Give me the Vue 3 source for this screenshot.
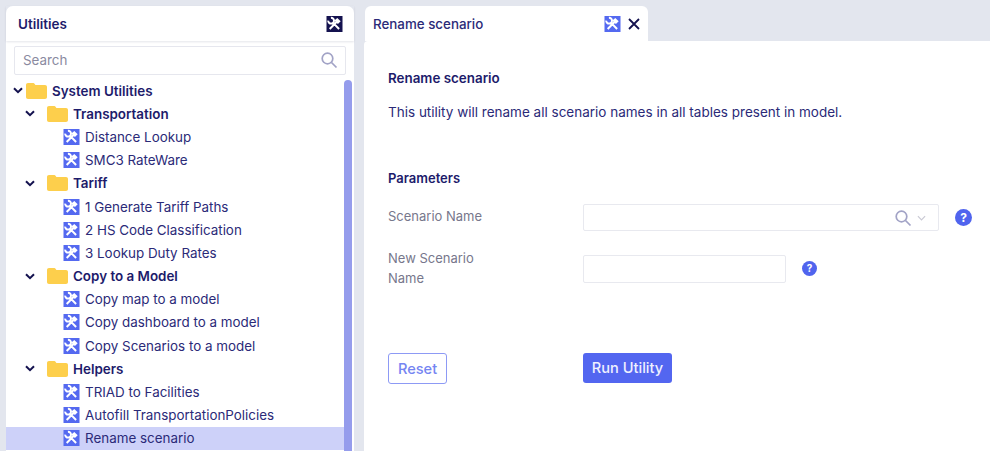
<script setup>
const tree = [
  { label: 'System Utilities', type: 'root' },
  { label: 'Transportation', type: 'folder' },
  { label: 'Distance Lookup', type: 'item' },
  { label: 'SMC3 RateWare', type: 'item' },
  { label: 'Tariff', type: 'folder' },
  { label: '1 Generate Tariff Paths', type: 'item' },
  { label: '2 HS Code Classification', type: 'item' },
  { label: '3 Lookup Duty Rates', type: 'item' },
  { label: 'Copy to a Model', type: 'folder' },
  { label: 'Copy map to a model', type: 'item' },
  { label: 'Copy dashboard to a model', type: 'item' },
  { label: 'Copy Scenarios to a model', type: 'item' },
  { label: 'Helpers', type: 'folder' },
  { label: 'TRIAD to Facilities', type: 'item' },
  { label: 'Autofill TransportationPolicies', type: 'item' },
  { label: 'Rename scenario', type: 'item', selected: true }
];
// wrench and handles as strokes, hammer head as a filled block
const toolLines = 'M4.400 1.800A2.900 2.900 0 1 1 1.700 4.600M6.400 6.600 12.600 13M10.500 5.500 3.200 13';
const toolHead = 'M14.200 5.300 10.800 1.900 7.800 4.400 11.400 8z';
</script>

<template>
  <div class="page">
    <aside class="side">
      <header class="side-head">
        <span class="side-title">Utilities</span>
        <svg class="tool dark" viewBox="0 0 16 16"><rect width="16" height="16" /><path class="lines" :d="toolLines" /><path class="head" :d="toolHead" /></svg>
      </header>
      <div class="search-wrap">
        <div class="search">
          <span>Search</span>
          <svg class="mag" viewBox="0 0 18 18"><circle cx="7.500" cy="7.500" r="5.300" /><path d="M11.500 11.500 16.500 16.500" /></svg>
        </div>
      </div>
      <div class="tree">
        <div class="thumb"></div>
        <div
          v-for="row in tree"
          :key="row.label"
          class="row"
          :class="[row.type, { selected: row.selected }]"
        >
          <template v-if="row.type === 'item'">
            <svg class="tool" viewBox="0 0 16 16"><rect width="16" height="16" /><path class="lines" :d="toolLines" /><path class="head" :d="toolHead" /></svg>
            <span>{{ row.label }}</span>
          </template>
          <template v-else>
            <svg class="chev" viewBox="0 0 10 7"><path d="M1 1.200 5 5.200 9 1.200" /></svg>
            <svg class="fold" viewBox="0 0 21 16"><path d="M0 2C0 .8.8 0 2 0h5c.8 0 1.200.3 1.700 1l.7 1H19c1.200 0 2 .8 2 2v10c0 1.200-.8 2-2 2H2c-1.200 0-2-.8-2-2z" /></svg>
            <span>{{ row.label }}</span>
          </template>
        </div>
      </div>
    </aside>

    <main class="main">
      <div class="tabs">
        <div class="tab">
          <span class="tab-title">Rename scenario</span>
          <svg class="tool" viewBox="0 0 16 16"><rect width="16" height="16" /><path class="lines" :d="toolLines" /><path class="head" :d="toolHead" /></svg>
          <svg class="close" viewBox="0 0 12 12"><path d="M1 1 11 11M11 1 1 11" /></svg>
        </div>
      </div>
      <section class="content">
        <h2 class="title">Rename scenario</h2>
        <p class="desc">This utility will rename all scenario names in all tables present in model.</p>
        <h3 class="params">Parameters</h3>
        <div class="field first">
          <label>Scenario Name</label>
          <div class="input wide">
            <svg class="mag" viewBox="0 0 18 18"><circle cx="7.500" cy="7.500" r="5.300" /><path d="M11.500 11.500 16.500 16.500" /></svg>
            <svg class="drop" viewBox="0 0 10 6"><path d="M1 1 5 5 9 1" /></svg>
          </div>
          <span class="help big">?</span>
        </div>
        <div class="field second">
          <label>New Scenario<br />Name</label>
          <div class="input narrow"></div>
          <span class="help small">?</span>
        </div>
        <div class="actions">
          <button class="btn-reset">Reset</button>
          <button class="btn-run">Run Utility</button>
        </div>
      </section>
    </main>
  </div>
</template>

<style>
html, body {
  margin: 0;
  background: #e3e6ee;
}
</style>

<style scoped>
.page {
  display: flex;
  height: 451px;
  width: 990px;
  overflow: hidden;
  box-sizing: border-box;
  padding: 6px 0 0 6px;
  background: #e3e6ee;
  font-family: Inter, "Liberation Sans", sans-serif;
  color: #1d1b6b;
}

.side {
  width: 348px;
  display: flex;
  flex-direction: column;
  background: #fff;
  border-radius: 7px 7px 0 0;
  flex: none;
}

.side-head {
  height: 35px;
  flex: none;
  display: flex;
  align-items: center;
  justify-content: space-between;
  padding: 0 11px 0 12px;
  box-shadow: 0 1px 2px rgba(40, 50, 90, 0.12);
  font-size: 13.5px;
  font-weight: 600;
}

.search-wrap {
  padding: 5px 8px 4px;
}

.search {
  height: 29px;
  box-sizing: border-box;
  border: 1px solid #e6e7ee;
  border-radius: 2px;
  display: flex;
  align-items: center;
  justify-content: space-between;
  padding: 0 7px 1px 8px;
  font-size: 13.4px;
  color: #8a8aa0;
}

.mag {
  width: 18px;
  height: 18px;
  fill: none;
  stroke: #a2a3c6;
  stroke-width: 1.7;
}

.tree {
  position: relative;
  flex: 1;
  min-height: 0;
}

.thumb {
  position: absolute;
  right: 2px;
  top: 1px;
  bottom: 0;
  width: 8px;
  border-radius: 4px 4px 0 0;
  background: #959cec;
}

.row {
  height: 23.2px;
  display: flex;
  align-items: center;
  font-size: 13.4px;
  color: #2b2a78;
  white-space: nowrap;
}

.row.root,
.row.folder {
  font-weight: 600;
  color: #1d1b6b;
}

.row.root {
  padding-left: 7px;
}

.row.folder {
  padding-left: 19px;
}

.row.item {
  padding-left: 57px;
}

.row.selected {
  background: #cdd1f9;
  margin-right: 10px;
}

.chev {
  width: 10px;
  height: 7px;
  fill: none;
  stroke: #14124f;
  stroke-width: 2;
  flex: none;
}

.fold {
  width: 21px;
  height: 16px;
  fill: #fdcf4c;
  flex: none;
}

.row.root .fold {
  margin: 0 5px 0 3px;
}

.row.folder .fold {
  margin: 0 5px 0 12px;
}

.tool {
  width: 17px;
  height: 16px;
  flex: none;
}

.tool rect {
  fill: #5469f0;
}

.tool .lines {
  fill: none;
  stroke: #fff;
  stroke-width: 2;
}

.tool .head {
  fill: #fff;
}

.tool.dark rect {
  fill: #14124f;
}

.row .tool {
  margin-right: 5px;
}

.main {
  flex: 1;
  min-width: 0;
  display: flex;
  flex-direction: column;
  padding-left: 10px;
}

.tabs {
  height: 35px;
  flex: none;
  padding-left: 1px;
}

.tab {
  width: 283px;
  height: 35px;
  background: #fff;
  border-radius: 6px 6px 0 0;
  box-sizing: border-box;
  display: flex;
  align-items: center;
  padding: 0 8px;
  font-size: 13.35px;
  font-weight: 500;
  color: #2b2a78;
}

.tab-title {
  flex: 1;
}

.close {
  width: 12px;
  height: 12px;
  margin-left: 7px;
  fill: none;
  stroke: #14124f;
  stroke-width: 1.8;
}

.content {
  flex: 1;
  background: #fff;
  padding: 29px 0 0 24px;
  border-radius: 4px 0 0 0;
}

.title {
  margin: 0;
  font-size: 13.4px;
  font-weight: 600;
  line-height: 16px;
  color: #1d1b6b;
}

.desc {
  margin: 18px 0 0;
  font-size: 13.5px;
  line-height: 16px;
  color: #2b2a78;
}

.params {
  margin: 50px 0 0;
  font-size: 13px;
  font-weight: 600;
  line-height: 16px;
  color: #1d1b6b;
}

.field {
  display: flex;
  align-items: center;
}

.field label {
  width: 195px;
  flex: none;
  font-size: 13px;
  line-height: 20px;
  color: #77778c;
}

.field.first {
  margin-top: 18px;
}

.field.first label {
  margin-bottom: 4px;
}

.field.second {
  margin-top: 17px;
}

.input {
  box-sizing: border-box;
  border: 1px solid #e8e9ef;
  border-radius: 2px;
  display: flex;
  align-items: center;
  justify-content: flex-end;
  flex: none;
}

.input.wide {
  width: 356px;
  height: 27px;
  padding-right: 12px;
}

.drop {
  width: 9px;
  height: 6px;
  margin-left: 5px;
  fill: none;
  stroke: #c9c9d4;
  stroke-width: 1.3;
}

.input.narrow {
  width: 203px;
  height: 28px;
  margin-top: 2px;
}

.help {
  flex: none;
  border-radius: 50%;
  background: #5064ee;
  color: #fff;
  font-weight: 700;
  display: flex;
  align-items: center;
  justify-content: center;
}

.help.big {
  width: 17px;
  height: 17px;
  margin-left: 16px;
  font-size: 12px;
}

.help.small {
  width: 15px;
  height: 15px;
  margin-left: 16px;
  font-size: 10px;
}

.actions {
  display: flex;
  margin-top: 65px;
}

.btn-reset,
.btn-run {
  font-family: inherit;
  font-size: 14.6px;
  font-weight: 500;
  border-radius: 3px;
  box-sizing: border-box;
  padding: 0;
}

.btn-reset {
  width: 59px;
  height: 31px;
  margin-right: 136px;
  background: #fff;
  border: 1.5px solid #8d9af5;
  color: #7585f2;
}

.btn-run {
  width: 89px;
  height: 30px;
  background: #5366f0;
  border: none;
  color: #eef0ff;
}
</style>
